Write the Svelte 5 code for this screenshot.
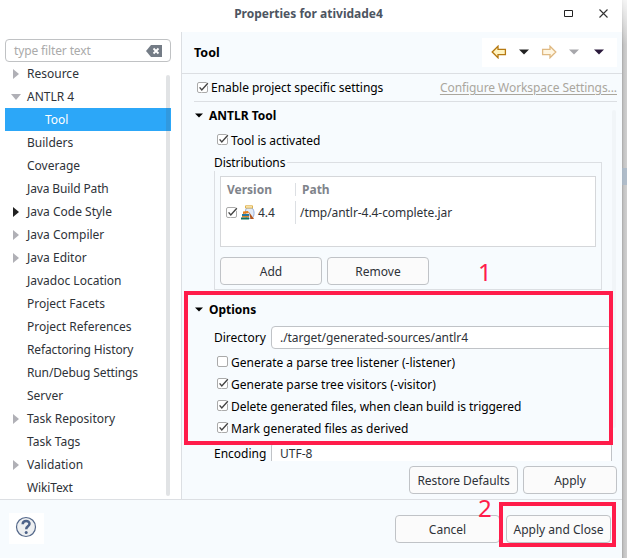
<script>
  const tree = [
    ['Resource', 'closed'], ['ANTLR 4', 'open'], ['Tool', 'selected'], ['Builders', ''],
    ['Coverage', ''], ['Java Build Path', 'tight'], ['Java Code Style', 'closed dark'],
    ['Java Compiler', 'closed'], ['Java Editor', 'closed'], ['Javadoc Location', ''],
    ['Project Facets', ''], ['Project References', ''], ['Refactoring History', 'tight'],
    ['Run/Debug Settings', 'tight'], ['Server', ''], ['Task Repository', 'closed'],
    ['Task Tags', ''], ['Validation', 'closed'], ['WikiText', 'tight']
  ];
  const options = [
    ['Generate a parse tree listener (-listener)', false],
    ['Generate parse tree visitors (-visitor)', true],
    ['Delete generated files, when clean build is triggered', true, 'snug'],
    ['Mark generated files as derived', true]
  ];
</script>

{#snippet check(on)}
  <svg class="check" width="12" height="12" viewBox="0 0 12 12">
    <rect x=".5" y=".5" width="10" height="10" rx="1.5" fill="#fff" stroke="#aaa" />
    {#if on}<path d="M2.6 5.6 4.8 8.3 10.6 1.4" fill="none" stroke="#fff" stroke-width="3" /><path d="M2.6 5.4 4.8 8 10.8 1.2" fill="none" stroke="#444" stroke-width="1.4" />{/if}
  </svg>
{/snippet}
{#snippet down(color)}
  <svg class="down" width="10" height="6" viewBox="0 0 10 6"><path d="M0 .5h10L5 5.5z" fill={color} /></svg>
{/snippet}
{#snippet small()}
  <svg width="8" height="5" viewBox="0 0 8 5"><path d="M0 .5h8L4 4.5z" fill="#000" /></svg>
{/snippet}
{#snippet arrow(flip)}
  <svg class:flip width="16" height="14" viewBox="0 0 16 14">
    <path d="M1.2 7 7 1.2V4.4H14.4V9.6H7V12.8Z" fill={flip ? '#fff6e2' : '#fff3c0'} stroke={flip ? '#dfb982' : '#b67a12'} stroke-width="1.3" />
  </svg>
{/snippet}

<div class="screen">
  <div class="window">
    <header class="title">
      <b>Properties for atividade4</b>
      <svg width="50" height="14" viewBox="0 0 50 14"><path d="M3.5 3.5h8v6h-8z" fill="none" stroke="#222" /><path d="M38.5 2.5l8 8m0-8l-8 8" stroke="#333" stroke-width="1.1" /></svg>
    </header>
    <main>
      <aside>
        <div class="filter"><span class="tight">type filter text</span>
          <svg width="16" height="12" viewBox="0 0 16 12"><path d="M0 6 5 0H16V12H5Z" fill="#747c86" /><path d="M7.5 3.5l5 5m0-5l-5 5" stroke="#fff" stroke-width="1.8" /></svg>
        </div>
        <div class="tree">
          {#each tree as [name, state]}
            <div class="node {state}"><i></i><span>{name}</span></div>
          {/each}
          <div class="treebar"></div>
        </div>
      </aside>
      <section class="page">
        <div class="head"><b>Tool</b>
          <div class="nav">{@render arrow(false)}{@render down('#222')}{@render arrow(true)}{@render down('#a7a7ab')}{@render down('#2b1a3c')}</div>
        </div>
        <div class="enable"><label>{@render check(true)}<span>Enable project specific settings</span></label><u>Configure Workspace Settings...</u></div>
        <div class="scroll">
          <div class="section">{@render small()}<b>ANTLR Tool</b></div>
          <div class="activated">{@render check(true)}<span>Tool is activated</span></div>
          <fieldset>
            <legend>Distributions</legend>
            <div class="table">
              <div class="cells th"><span>Version</span><span>Path</span></div>
              <div class="cells td">
                <span>{@render check(true)}
                  <svg class="jar" width="14" height="15" viewBox="0 0 14 15">
                    <path d="M5.5 3C4 5 4 10 5.5 13.5h5.5c2.5-2 3-8 0-10.500z" fill="#e3ebf6" stroke="#93addb" />
                    <path d="M4.500 .8h7v2.200h-7z" fill="#fff3cf" stroke="#dcab3e" stroke-width=".9" />
                    <path d="M2 6.500 7 6l1 2-6 1z" fill="#e8801a" /><path d="M1 9h7v2H1z" fill="#27789f" />
                    <path d="M1 11h7v1.500H1z" fill="#e0862a" /><path d="M0 12.500h8v2H0z" fill="#14705f" />
                    <path d="M8 7l5 7H9.500z" fill="#b4561d" />
                  </svg>4.4</span><span class="snug">/tmp/antlr-4.4-complete.jar</span>
              </div>
            </div>
            <div class="pair"><button>Add</button><button>Remove</button></div>
          </fieldset>
          <div class="section opt">{@render small()}<b>Options</b></div>
          <div class="field"><span>Directory</span><div class="input snug">./target/generated-sources/antlr4</div></div>
          <div class="options">
            {#each options as [text, on, spacing]}
              <div class="option">{@render check(on)}<span class={spacing}>{text}</span></div>
            {/each}
          </div>
          <div class="field enc"><span>Encoding</span><div class="input">UTF-8</div></div>
          <div class="pagebar"></div>
        </div>
        <div class="actions"><button class="snug">Restore Defaults</button><button>Apply</button></div>
      </section>
    </main>
    <footer>
      <div class="help"><svg width="22" height="22" viewBox="0 0 22 22"><circle cx="11" cy="11" r="9.5" fill="#edeff1" stroke="#54688a" stroke-width="1.2" /><path d="M7.7 8.200C7.700 3.900 14.700 4 14.500 8 14.400 10.300 11.200 10.400 11.200 13.200" fill="none" stroke="#4d6288" stroke-width="2.5" /><circle cx="11.2" cy="16.4" r="1.5" fill="#4d6288" /></svg></div>
      <div class="closers"><button>Cancel</button><button>Apply and Close</button></div>
    </footer>
  </div>
  <div class="shade"><i></i></div>
  <div class="mark first"></div>
  <div class="mark second"></div>
  <span class="number one">1</span>
  <span class="number two">2</span>
</div>

<style>
  :global(body) { background: #fff; }
  * { box-sizing: border-box; }
  .screen { position: relative; display: flex; width: 627px; height: 558px; overflow: hidden; font: 12px/17px "Noto Sans", sans-serif; color: #000; white-space: nowrap; }
  .window { width: 622px; display: flex; flex-direction: column; background: #f7fbfe; }
  .shade { width: 5px; padding-top: 168px; background: linear-gradient(rgba(255, 255, 255, .8), transparent 45px), linear-gradient(90deg, #a8a8a8, #c4c4c4 35%, #d0d0d0); }
  .shade i { display: block; height: 17px; background: #a9b9c9; opacity: .8; }
  .snug { letter-spacing: -.06px; }
  .tight { letter-spacing: -.13px; }
  svg { flex: none; display: block; }
  .title { position: relative; height: 32px; background: #fff; text-align: center; color: #4d5561; padding: 5px 5px 0 0; }
  .title svg { position: absolute; right: 11px; top: 7px; }
  main { display: flex; height: 467px; }
  aside { width: 182px; border-right: 1px solid #dcdfe3; background: #fff; padding: 7px 10px 0 5px; }
  .filter { display: flex; justify-content: space-between; align-items: center; height: 23px; border: 1px solid #c0c2c4; border-radius: 4px; padding: 0 8px; color: #aaa; }
  .tree { position: relative; height: 437px; }
  .node { display: flex; height: 23px; align-items: center; padding-left: 8px; color: #2e3238; }
  .node i { width: 14px; }
  .node.closed i::before { content: ''; display: block; width: 0; border: 5px solid transparent; border-left: 6px solid #b0b0b6; border-right: 0; }
  .node.dark i::before { border-left-color: #222; }
  .node.open i::before { content: ''; display: block; width: 0; margin-left: -2px; border: 5px solid transparent; border-top: 6px solid #b0b0b6; border-bottom: 0; }
  .node.selected { background: #2ca7f8; color: #fff; padding-left: 26px; }
  .treebar { position: absolute; right: 1px; top: 13px; width: 4px; height: 421px; border-radius: 2px; background: rgba(80, 90, 100, .17); }
  .page { width: 440px; display: flex; flex-direction: column; }
  .head { display: flex; justify-content: space-between; align-items: center; height: 42px; padding: 0 5px 1px 12px; border-bottom: 1px solid #dcdfe3; }
  .head b { font-size: 12.5px; }
  .nav { display: flex; align-items: center; width: 135px; height: 29px; padding-left: 9px; background: #fff; }
  .nav svg:nth-child(2) { margin: 0 12px 0 12px; }
  .nav svg:nth-child(4) { margin: 0 15px 0 12px; }
  .flip { transform: scaleX(-1); }
  .enable { display: flex; align-items: center; justify-content: space-between; height: 28px; margin: 0 5px 0 12px; padding-left: 3px; border-bottom: 1px solid #dcdfe3; }
  .enable label { display: flex; align-items: center; gap: 2px; }
  .enable label span { letter-spacing: -.03px; }
  u { color: #aaa69d; text-underline-offset: 2px; letter-spacing: -.07px; }
  .scroll { position: relative; height: 359px; overflow: hidden; padding-left: 12px; }
  .section { display: flex; align-items: center; gap: 6px; height: 27px; padding-left: 1px; }
  .activated { display: flex; align-items: center; gap: 2px; height: 22px; padding-left: 23px; }
  .activated span { letter-spacing: -.03px; }
  fieldset { position: relative; width: 388px; height: 128px; margin: 11px 0 0 20px; padding: 13px 5px 0; border: 1px solid #dcdfe3; min-width: 0; }
  legend { position: absolute; top: -9px; left: -1px; padding: 0 2px 0 0; background: #f7fbfe; letter-spacing: -.1px; }
  .table { width: 376px; height: 71px; border: 1px solid #d5d7da; background: #fff; }
  .cells { display: flex; align-items: center; height: 23px; color: #2e3238; }
  .cells span { display: flex; align-items: center; }
  .cells span:first-child { width: 75px; padding-left: 5px; border-right: 1px solid #dcdfe3; }
  .cells span:last-child { padding-left: 4px; }
  .th { color: #7f848b; font-weight: bold; height: 24px; }
  .th span:first-child { padding-left: 6px; height: 13px; }
  .th span:last-child { padding-left: 6px; }
  .td span:first-child { height: 23px; }
  .jar { margin: 0 3px 0 3px; }
  button { font: inherit; color: #2e3238; border: 1px solid #c0c3c7; border-radius: 4px; background: #fbfbfb; height: 28px; padding: 0; }
  .pair { display: flex; gap: 5px; margin-top: 10px; }
  .pair button { width: 102px; }
  .opt { margin-top: 5px; height: 28px; }
  .field { display: flex; align-items: center; padding-left: 20px; margin-top: 3px; }
  .field > span { width: 57px; }
  .input { width: 341px; height: 23px; border: 1px solid #c0c3c7; border-radius: 4px; background: #fff; padding: 2px 8px; color: #2e3238; }
  .options { padding-top: 2px; }
  .option { display: flex; align-items: center; gap: 2px; height: 22px; padding-left: 23px; }
  .pagebar { position: absolute; right: 6px; top: 8px; width: 4px; height: 318px; border-radius: 2px; background: #f1f5f8; }
  .actions { display: flex; justify-content: flex-end; gap: 5px; padding: 5px 5px 0 0; }
  .actions button:first-child { width: 109px; }
  .actions button:last-child { width: 94px; }
  footer { display: flex; justify-content: space-between; border-top: 1px solid #dcdfe3; height: 59px; padding: 13px 11px 0 9px; }
  .help { width: 35px; height: 31px; padding: 3px 0 0 6px; background: #fff; }
  .closers { display: flex; gap: 6px; padding-top: 2px; }
  .closers button { width: 105px; }
  .mark { position: absolute; border: 4px solid #ff1c4a; }
  .first { left: 184px; top: 291px; width: 429px; height: 154px; }
  .second { left: 499px; top: 502px; width: 117px; height: 45px; }
  .number { position: absolute; color: #ff1c4a; font-size: 24px; line-height: 28px; }
  .one { left: 478px; top: 258px; }
  .two { left: 478px; top: 494px; }
</style>
